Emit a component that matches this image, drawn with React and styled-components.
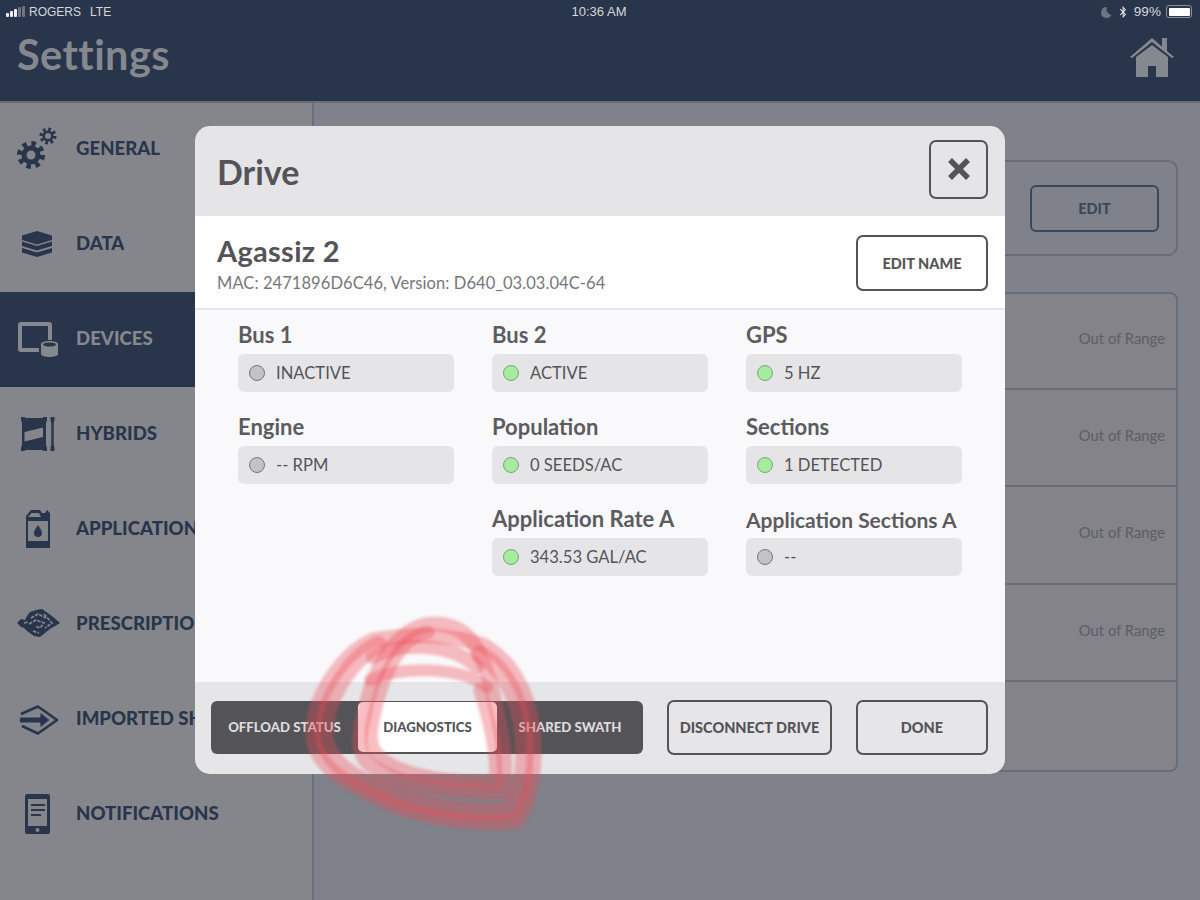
import React from 'react';
import styled, { createGlobalStyle } from 'styled-components';
import { FaBluetoothB } from 'react-icons/fa';

const GlobalStyle = createGlobalStyle`
  html, body { margin: 0; padding: 0; background: #7f828a; }
  * { box-sizing: border-box; }
  body { font-family: Lato, "Open Sans", sans-serif; }
`;

const NAVY = '#28354a';
const INK = '#545458';

const Screen = styled.div`
  position: relative;
  width: 1200px;
  height: 900px;
  overflow: hidden;
  background: #7f828a;
`;

const Header = styled.header`
  position: relative;
  height: 101px;
  background: ${NAVY};
  box-shadow: 0 2px 0 #686c75;
  padding-top: 3px;
`;

const StatusBar = styled.div`
  display: flex;
  align-items: center;
  justify-content: space-between;
  height: 17px;
  padding: 0 8px 0 6px;
  font-family: "Liberation Sans", sans-serif;
  font-size: 13px;
  color: #d6d8dd;
`;

const StatusSide = styled.div`
  display: flex;
  align-items: center;
  gap: ${(p) => p.$gap || 4}px;
  width: 220px;
  justify-content: ${(p) => (p.$end ? 'flex-end' : 'flex-start')};
`;

const Carrier = styled.span`
  font-size: 12px;
  margin-left: ${(p) => p.$indent || 0}px;
`;

const Signal = styled.div`
  display: flex;
  align-items: flex-end;
  gap: 1px;
  height: 11px;
`;

const SignalBar = styled.span`
  width: 3px;
  height: ${(p) => p.$h}px;
  border-radius: 1px;
  background: ${(p) => (p.$on ? '#eef0f3' : '#6d7480')};
`;

const BatteryLevel = styled.span`
  font-size: 13.5px;
  letter-spacing: 0.1px;
`;

const Battery = styled.div`
  width: 26px;
  height: 13px;
  padding: 1.5px;
  border: 1px solid #8a8f98;
  border-radius: 3px;
`;

const BatteryFill = styled.div`
  height: 100%;
  border-radius: 1px;
  background: #fff;
`;

const TitleRow = styled.div`
  display: flex;
  align-items: center;
  justify-content: space-between;
  height: 70px;
  padding: 0 25px 0 17px;
`;

const PageTitle = styled.h1`
  margin: 0 0 2px;
  font-size: 41.5px;
  font-weight: 700;
  letter-spacing: 0.4px;
  color: #85888f;
`;

const Content = styled.div`
  display: flex;
  height: 799px;
`;

const Sidebar = styled.nav`
  width: 314px;
  flex: none;
  padding-top: 1px;
  background: #85868c;
  border-right: 2px solid #6a6f7c;
`;

const NavRow = styled.div`
  display: flex;
  align-items: center;
  gap: 16px;
  height: 95px;
  padding: 0 0 3px 16px;
  white-space: nowrap;
  font-size: 18.6px;
  font-weight: 900;
  color: ${(p) => (p.$active ? '#85888f' : NAVY)};
  background: ${(p) => (p.$active ? NAVY : 'transparent')};
`;

const NavLabel = styled.span`
  display: block;
  overflow: hidden;
  max-width: ${(p) => (p.$clipped ? '119px' : 'none')};
`;

const Main = styled.main`
  flex: 1;
  padding: 59px 22px 0 0;
`;

const TopCard = styled.div`
  display: flex;
  justify-content: flex-end;
  align-items: center;
  height: 96px;
  padding-right: 17px;
  margin-bottom: 36px;
  border: 2px solid #696d77;
  border-radius: 10px;
`;

const EditButton = styled.div`
  display: flex;
  align-items: center;
  justify-content: center;
  width: 129px;
  height: 47px;
  border: 2px solid #3b475b;
  border-radius: 6px;
  font-size: 14.5px;
  font-weight: 900;
  color: #3b475b;
`;

const DeviceList = styled.div`
  border: 2px solid #696d77;
  border-radius: 8px;
  height: 480px;
  background: #838389;
`;

const DeviceRow = styled.div`
  display: flex;
  align-items: center;
  justify-content: flex-end;
  height: 97.2px;
  padding: 0 11px 5px 0;
  margin-top: ${(p) => (p.$first ? '-1px' : 0)};
  border-bottom: ${(p) => (p.$last ? 'none' : '2px solid #696d77')};
  font-size: 14.8px;
  color: #5b5f68;
`;

const Modal = styled.section`
  position: absolute;
  left: 195px;
  top: 126px;
  width: 810px;
  height: 648px;
  display: flex;
  flex-direction: column;
  border-radius: 15px;
  overflow: hidden;
  color: ${INK};
`;

const ModalTop = styled.div`
  display: flex;
  align-items: center;
  justify-content: space-between;
  height: 90px;
  padding: 0 17px 4px 22px;
  background: #e5e5e7;
`;

const ModalTitle = styled.h2`
  margin: 4px 0 0;
  font-size: 34px;
  font-weight: 700;
  color: ${INK};
`;

const OutlineButton = styled.div`
  display: flex;
  align-items: center;
  justify-content: center;
  flex: none;
  width: ${(p) => p.$w}px;
  height: ${(p) => p.$h}px;
  margin-right: ${(p) => p.$gap || 0}px;
  border: 2px solid ${INK};
  border-radius: 7px;
  font-size: 14.5px;
  font-weight: 900;
  color: ${INK};
`;

const NameBar = styled.div`
  display: flex;
  align-items: center;
  justify-content: space-between;
  height: 94px;
  padding: 2px 17px 0 22px;
  background: #fff;
  border-bottom: 2px solid #e6e6e8;
`;

const DeviceName = styled.div`
  padding-top: 2px;
  font-size: 29px;
  font-weight: 700;
  line-height: 34px;
  letter-spacing: 0.3px;
`;

const DeviceMeta = styled.div`
  margin-top: 4px;
  font-size: 16.5px;
  line-height: 22px;
  letter-spacing: 0.07px;
  color: #77777b;
`;

const StatusGrid = styled.div`
  flex: 1;
  display: grid;
  grid-template-columns: repeat(3, 216px);
  grid-auto-rows: 92px;
  column-gap: 38px;
  padding: 10px 0 0 43px;
  background: #f9f9fb;
`;

const StatusCell = styled.div`
  grid-column: ${(p) => p.$col || 'auto'};
`;

const StatusLabel = styled.div`
  height: 34px;
  padding-top: ${(p) => (p.$small ? 1 : 0)}px;
  font-size: ${(p) => (p.$small ? 21 : 22)}px;
  font-weight: 700;
  line-height: 30px;
  white-space: nowrap;
  color: #5c5c60;
`;

const StatusValue = styled.div`
  display: flex;
  align-items: center;
  gap: 11px;
  height: 38px;
  padding-left: 11px;
  border-radius: 6px;
  background: #e5e5e7;
  font-size: 16.6px;
`;

const Lamp = styled.span`
  width: 16px;
  height: 16px;
  flex: none;
  border-radius: 50%;
  border: 1px solid ${(p) => (p.$on ? '#75a878' : '#77777b')};
  background: ${(p) => (p.$on ? '#a6eb9f' : '#c3c3c6')};
`;

const ModalFooter = styled.div`
  display: flex;
  align-items: center;
  height: 92px;
  padding: 0 16px 2px;
  background: #e6e6e8;
`;

const Segments = styled.div`
  display: flex;
  align-items: center;
  width: 432px;
  height: 53px;
  margin-right: 24px;
  border-radius: 6px;
  background: ${INK};
  font-size: 13.2px;
  font-weight: 900;
`;

const Segment = styled.div`
  display: flex;
  align-items: center;
  justify-content: center;
  width: ${(p) => p.$w}px;
  height: 50px;
  flex: none;
  border-radius: 5px;
  white-space: nowrap;
  color: ${(p) => (p.$active ? INK : '#dcdcde')};
  background: ${(p) => (p.$active ? '#fff' : 'transparent')};
`;

const Scribble = styled.svg`
  position: absolute;
  left: 0;
  top: 0;
  pointer-events: none;
  filter: blur(1.6px);
`;

const Icon = ({ children }) => (
  <svg width="44" height="44" viewBox="0 0 44 44" fill="currentColor" style={{ flex: 'none' }}>
    {children}
  </svg>
);

const Gear = ({ cx, cy, r, tooth, hole }) => (
  <g>
    <circle cx={cx} cy={cy} r={r} fill="none" stroke="currentColor" strokeWidth={tooth}
      strokeDasharray={`${(2 * Math.PI * r) / 16} ${(2 * Math.PI * r) / 16}`} />
    <circle cx={cx} cy={cy} r={r - tooth / 2 + 0.5} />
    <circle cx={cx} cy={cy} r={hole} fill="#85868c" />
  </g>
);

const icons = {
  general: (
    <Icon>
      <Gear cx={15} cy={29} r={11.5} tooth={5} hole={4.5} />
      <Gear cx={32} cy={10} r={6.8} tooth={3.4} hole={3} />
    </Icon>
  ),
  data: (
    <Icon>
      <path d="M21 10 L36 14.5 V19 L21 23.5 L6 19 V14.5 Z" />
      <path d="M6 20.5 L21 25 L36 20.5 V25 L21 29.5 L6 25 Z" />
      <path d="M6 27 L21 31.5 L36 27 V31.5 L21 36 L6 31.5 Z" />
    </Icon>
  ),
  devices: (
    <Icon>
      <path fillRule="evenodd" d="M5 6 H33 Q36 6 36 9 V24 H32 V10 H6 V32 H23 V36 H5 Q2 36 2 33 V9 Q2 6 5 6 Z" />
      <path d="M25 28 C25 24 42 24 42 28 V38 C42 42 25 42 25 38 Z" />
      <ellipse cx="33.5" cy="28.5" rx="6.5" ry="2" fill="#28354a" />
    </Icon>
  ),
  hybrids: (
    <Icon>
      <path d="M5 6 H8 L10 7 H26 L28 6 H31 V9 L30 12 V34 L31 37 V40 H28 L26 39 H10 L8 40 H5 V37 L6 34 V12 L5 9 Z" />
      <path d="M8.5 21 L27 16.5 V26 L8.5 30.5 Z" fill="#85868c" />
      <path d="M34.5 6 H38.5 V9 L37.7 12 V34 L38.5 37 V40 H34.5 V37 L35.3 34 V12 L34.5 9 Z" />
    </Icon>
  ),
  application: (
    <Icon>
      <path fillRule="evenodd" d="M10 42 V10 L15 4 H24 L26 7 H29 L31 4 L34 7 V42 Z M12 11 H25 L23 7 H15.5 Z M12 15 V35 H32 V15 Z" />
      <path d="M22 19 C24.5 23 26 24.5 26 27 A4 4 0 0 1 18 27 C18 24.5 19.5 23 22 19 Z" />
    </Icon>
  ),
  prescription: (
    <Icon>
      <path d="M20 9 L26 8 L36 15 L44 22 L34 28 L24 36 L18 35 L11 30 L8 27 L5 26 L1 22 L5 18 L9 19 L11 15 L14 11 Z" />
      <path d="M15 17 L22 13 L30 17 M13 23 L20 19 L28 22 L24 27 L19 25 M28 13 L36 22 L29 27 M17 30 L23 32 M8 22 L12 21" fill="none" stroke="#85868c" strokeWidth="1.7" strokeDasharray="3.5 1.2" />
    </Icon>
  ),
  imported: (
    <Icon>
      <path d="M5 18 L22 10.5 L41 24 L22 37.5 L6 30" fill="none" stroke="currentColor" strokeWidth="2.6" strokeLinejoin="round" />
      <path d="M4 21 H24 V16 L34 24 L24 32 V27 H4 Q2.5 24 4 21 Z" stroke="#85868c" strokeWidth="1" />
    </Icon>
  ),
  notifications: (
    <Icon>
      <path fillRule="evenodd" d="M11 3 H32 Q34 3 34 5 V41 Q34 43 32 43 H11 Q9 43 9 41 V5 Q9 3 11 3 Z M12 8 V35 H31 V8 Z" />
      <circle cx="21.5" cy="39" r="2" fill="#85868c" />
      <rect x="15" y="13" width="14" height="2" />
      <rect x="15" y="18" width="14" height="2" />
      <rect x="15" y="23" width="10" height="2" />
    </Icon>
  ),
};

const navItems = [
  { key: 'general', label: 'GENERAL' },
  { key: 'data', label: 'DATA' },
  { key: 'devices', label: 'DEVICES', active: true },
  { key: 'hybrids', label: 'HYBRIDS' },
  { key: 'application', label: 'APPLICATIONS', clipped: true },
  { key: 'prescription', label: 'PRESCRIPTIONS', clipped: true },
  { key: 'imported', label: 'IMPORTED SHAPES', clipped: true },
  { key: 'notifications', label: 'NOTIFICATIONS' },
];

const statuses = [
  { label: 'Bus 1', value: 'INACTIVE' },
  { label: 'Bus 2', value: 'ACTIVE', on: true },
  { label: 'GPS', value: '5 HZ', on: true },
  { label: 'Engine', value: '-- RPM' },
  { label: 'Population', value: '0 SEEDS/AC', on: true },
  { label: 'Sections', value: '1 DETECTED', on: true },
  { label: 'Application Rate A', value: '343.53 GAL/AC', on: true, col: 2 },
  { label: 'Application Sections A', value: '--', small: true },
];

// hand drawn marker loops over the tab bar
const strokes = [
  { d: 'M373 640 C340 655 312 700 313 735 C314 765 345 785 400 808 C450 823 490 824 517 821 C533 800 536 760 533 730 C528 690 510 660 483 645 C450 634 410 634 373 640', w: 15 },
  { d: 'M378 645 C348 660 324 702 324 735 C326 762 352 780 405 800 C450 813 490 813 510 811 C524 795 526 760 523 732 C518 695 505 668 480 654', w: 18 },
  { d: 'M433 624 C400 626 374 662 364 715 C356 745 360 760 375 768 C400 785 440 792 503 792 C508 760 502 730 490 682 C478 642 465 624 433 624', w: 15 },
  { d: 'M428 632 C402 636 384 670 374 716 C368 742 372 752 384 760 C405 775 445 782 495 782 C498 760 492 730 480 690', w: 13 },
  { d: 'M373 657 C400 642 450 642 477 667', w: 14 },
  { d: 'M370 680 C400 666 460 666 487 687', w: 12 },
];

const Home = () => (
  <svg width="46" height="42" viewBox="0 0 46 42" fill="#85888f" style={{ marginTop: 6 }}>
    <path d="M1 20 L23 1 L33 9.5 V1 H38 V14 L45 20 L43 21 L23 5 L3 21 Z" />
    <path fillRule="evenodd" d="M23 8 L39 20 V40 H27 V29 H19 V40 H7 V20 Z" />
  </svg>
);

const App = () => (
  <Screen>
    <GlobalStyle />
    <Header>
      <StatusBar>
        <StatusSide>
          <Signal>
            <SignalBar $h={4} $on />
            <SignalBar $h={6} $on />
            <SignalBar $h={8} $on />
            <SignalBar $h={10} />
            <SignalBar $h={11} />
          </Signal>
          <Carrier>ROGERS</Carrier>
          <Carrier $indent={5}>LTE</Carrier>
        </StatusSide>
        <span>10:36 AM</span>
        <StatusSide $end $gap={5}>
          <svg width="12" height="12" viewBox="0 0 12 12" fill="#6d7480">
            <path d="M7 1 A5.5 5.5 0 1 0 11.5 9 A6 6 0 0 1 7 1 Z" />
          </svg>
          <FaBluetoothB size={12} color="#e8eaee" />
          <BatteryLevel>99%</BatteryLevel>
          <Battery><BatteryFill /></Battery>
        </StatusSide>
      </StatusBar>
      <TitleRow>
        <PageTitle>Settings</PageTitle>
        <Home />
      </TitleRow>
    </Header>
    <Content>
      <Sidebar>
        {navItems.map((item) => (
          <NavRow key={item.key} $active={item.active}>
            {icons[item.key]}
            <NavLabel $clipped={item.clipped}>{item.label}</NavLabel>
          </NavRow>
        ))}
      </Sidebar>
      <Main>
        <TopCard><EditButton>EDIT</EditButton></TopCard>
        <DeviceList>
          <DeviceRow $first>Out of Range</DeviceRow>
          <DeviceRow>Out of Range</DeviceRow>
          <DeviceRow>Out of Range</DeviceRow>
          <DeviceRow>Out of Range</DeviceRow>
          <DeviceRow $last />
        </DeviceList>
      </Main>
    </Content>
    <Modal>
      <ModalTop>
        <ModalTitle>Drive</ModalTitle>
        <OutlineButton $w={59} $h={59}>
          <svg width="24" height="24" viewBox="0 0 24 24">
            <path d="M3 3 L21 21 M21 3 L3 21" stroke={INK} strokeWidth="5.5" />
          </svg>
        </OutlineButton>
      </ModalTop>
      <NameBar>
        <div>
          <DeviceName>Agassiz 2</DeviceName>
          <DeviceMeta>MAC: 2471896D6C46, Version: D640_03.03.04C-64</DeviceMeta>
        </div>
        <OutlineButton $w={132} $h={56}>EDIT NAME</OutlineButton>
      </NameBar>
      <StatusGrid>
        {statuses.map((s) => (
          <StatusCell key={s.label} $col={s.col}>
            <StatusLabel $small={s.small}>{s.label}</StatusLabel>
            <StatusValue><Lamp $on={s.on} />{s.value}</StatusValue>
          </StatusCell>
        ))}
      </StatusGrid>
      <ModalFooter>
        <Segments>
          <Segment $w={147}>OFFLOAD STATUS</Segment>
          <Segment $w={139} $active>DIAGNOSTICS</Segment>
          <Segment $w={146}>SHARED SWATH</Segment>
        </Segments>
        <OutlineButton $w={165} $h={55} $gap={24}>DISCONNECT DRIVE</OutlineButton>
        <OutlineButton $w={132} $h={55}>DONE</OutlineButton>
      </ModalFooter>
    </Modal>
    <Scribble width="1200" height="900" viewBox="0 0 1200 900" fill="none">
      {strokes.map((s, i) => (
        <path key={i} d={s.d} stroke="#ec4a55" strokeOpacity="0.36" strokeWidth={s.w} strokeLinecap="round" />
      ))}
    </Scribble>
  </Screen>
);

export default App;
